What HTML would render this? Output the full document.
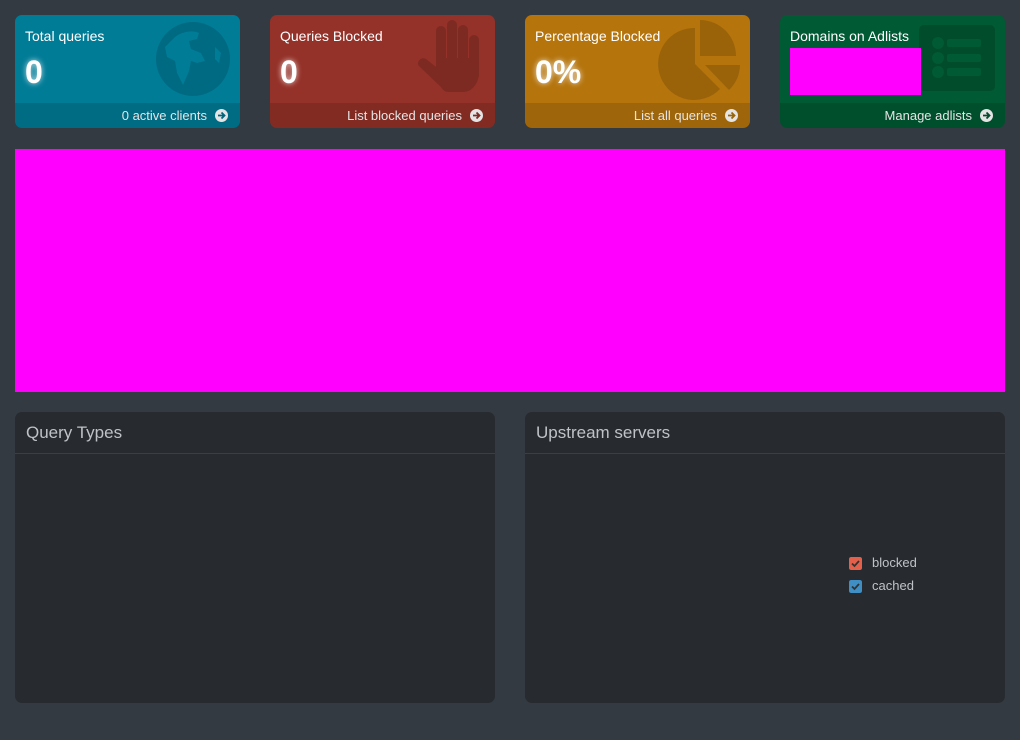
<!DOCTYPE html>
<html><head><style>
body{margin:0;width:1020px;height:740px;background:#343a42;font-family:"Liberation Sans",sans-serif;position:relative;overflow:hidden}
.box{position:absolute;top:15px;width:225px;height:113px;border-radius:7px;overflow:hidden;color:#fff}
.box .t{position:absolute;left:10px;top:13px;font-size:14px;line-height:16px}
.box .n{position:absolute;left:10px;top:39px;font-size:32px;line-height:36px;font-weight:bold;text-shadow:0 0 6px rgba(255,255,255,.8)}
.box .f{position:absolute;left:0;right:0;bottom:0;height:25px;background:rgba(0,0,0,.12);font-size:13px;color:#e4e4e4;text-align:right;line-height:26px;padding-right:33px;box-sizing:border-box}
.box svg{position:absolute}
.box .f svg{right:12px;top:6px}
.panel{position:absolute;top:412px;width:480px;height:291px;background:#272b30;border-radius:7px}
.panel .h{height:41px;border-bottom:1px solid #3a3f45;color:#bfc3c7;font-size:17px;line-height:41px;padding-left:11px}
.cb{position:absolute;width:13px;height:13px;border-radius:2px}
.lg{position:absolute;font-size:13px;color:#bfc3c7;line-height:16px}
</style></head><body>
<div class="box" style="left:15px;background:#007c97">
<svg style="left:140px;top:6px" width="76" height="76" viewBox="0 0 76 76"><circle cx="38" cy="38" r="37" fill="#006a82"/><path d="M20 16c8-6 18-7 24-4l-2 6-8 2 2 8 10 4 4 8-8 2-6-2-2 10-6 14-6-12-2-12-8-4-2-10z" fill="#007c97"/><path d="M60 26l6 6-2 10-4-4z" fill="#007c97"/></svg>
<div class="t">Total queries</div><div class="n">0</div>
<div class="f">0 active clients<svg width="13" height="13" viewBox="0 0 13 13"><circle cx="6.5" cy="6.5" r="6.5" fill="#e4e4e4"/><path d="M3 6.5h6M6.5 3.5l3 3-3 3" stroke="#00657c" stroke-width="1.8" fill="none"/></svg></div></div>
<div class="box" style="left:270px;background:#943128">
<svg style="left:145px;top:3px" width="75" height="80" viewBox="0 0 75 80"><g fill="#7d2a22"><rect x="21" y="8" width="10" height="50" rx="5"/><rect x="32" y="2" width="10" height="56" rx="5"/><rect x="43" y="7" width="10" height="51" rx="5"/><rect x="54" y="17" width="10" height="45" rx="5"/><path d="M21 40h43v14c0 10-6 20-16 20H34c-4 0-6-2-8-5L4 48c-3-4 2-10 7-7l10 8z"/></g></svg>
<div class="t">Queries Blocked</div><div class="n">0</div>
<div class="f">List blocked queries<svg width="13" height="13" viewBox="0 0 13 13"><circle cx="6.5" cy="6.5" r="6.5" fill="#e4e4e4"/><path d="M3 6.5h6M6.5 3.5l3 3-3 3" stroke="#7d2a22" stroke-width="1.8" fill="none"/></svg></div></div>
<div class="box" style="left:525px;background:#b5740c">
<svg style="left:133px;top:5px" width="85" height="85" viewBox="0 0 85 85"><g fill="#9a6309"><path d="M37 8A36 36 0 1 0 62 69L37 44Z"/><path d="M42 0A36 36 0 0 1 78 36H42Z"/><path d="M47 45H82A36 36 0 0 1 71 70Z"/></g></svg>
<div class="t">Percentage Blocked</div><div class="n">0%</div>
<div class="f">List all queries<svg width="13" height="13" viewBox="0 0 13 13"><circle cx="6.5" cy="6.5" r="6.5" fill="#e4e4e4"/><path d="M3 6.5h6M6.5 3.5l3 3-3 3" stroke="#9a6309" stroke-width="1.8" fill="none"/></svg></div></div>
<div class="box" style="left:780px;background:#005a33">
<svg style="left:139px;top:10px" width="76" height="66" viewBox="0 0 76 66"><rect width="76" height="66" rx="5" fill="#004c2b"/><circle cx="19" cy="18" r="6" fill="#005a33"/><circle cx="19" cy="33" r="6" fill="#005a33"/><circle cx="19" cy="47" r="6" fill="#005a33"/><rect x="28" y="14" width="34" height="8" rx="2" fill="#005a33"/><rect x="28" y="29" width="34" height="8" rx="2" fill="#005a33"/><rect x="28" y="43" width="34" height="8" rx="2" fill="#005a33"/></svg>
<div class="t">Domains on Adlists</div>
<div style="position:absolute;left:10px;top:33px;width:131px;height:47px;background:#f0f"></div>
<div class="f">Manage adlists<svg width="13" height="13" viewBox="0 0 13 13"><circle cx="6.5" cy="6.5" r="6.5" fill="#e4e4e4"/><path d="M3 6.5h6M6.5 3.5l3 3-3 3" stroke="#004c2b" stroke-width="1.8" fill="none"/></svg></div></div>
<div style="position:absolute;left:15px;top:149px;width:990px;height:243px;background:#f0f"></div>
<div class="panel" style="left:15px"><div class="h">Query Types</div></div>
<div class="panel" style="left:525px"><div class="h">Upstream servers</div></div>
<svg class="cb" style="left:849px;top:557px" width="13" height="13" viewBox="0 0 13 13"><rect width="13" height="13" rx="2" fill="#e5604b"/><path d="M3 6.5l2.5 2.5 4.5-5" stroke="#333" stroke-width="1.8" fill="none"/></svg><div class="lg" style="left:872px;top:555px">blocked</div>
<svg class="cb" style="left:849px;top:580px" width="13" height="13" viewBox="0 0 13 13"><rect width="13" height="13" rx="2" fill="#3f8ec4"/><path d="M3 6.5l2.5 2.5 4.5-5" stroke="#333" stroke-width="1.8" fill="none"/></svg><div class="lg" style="left:872px;top:578px">cached</div>
</body></html>
